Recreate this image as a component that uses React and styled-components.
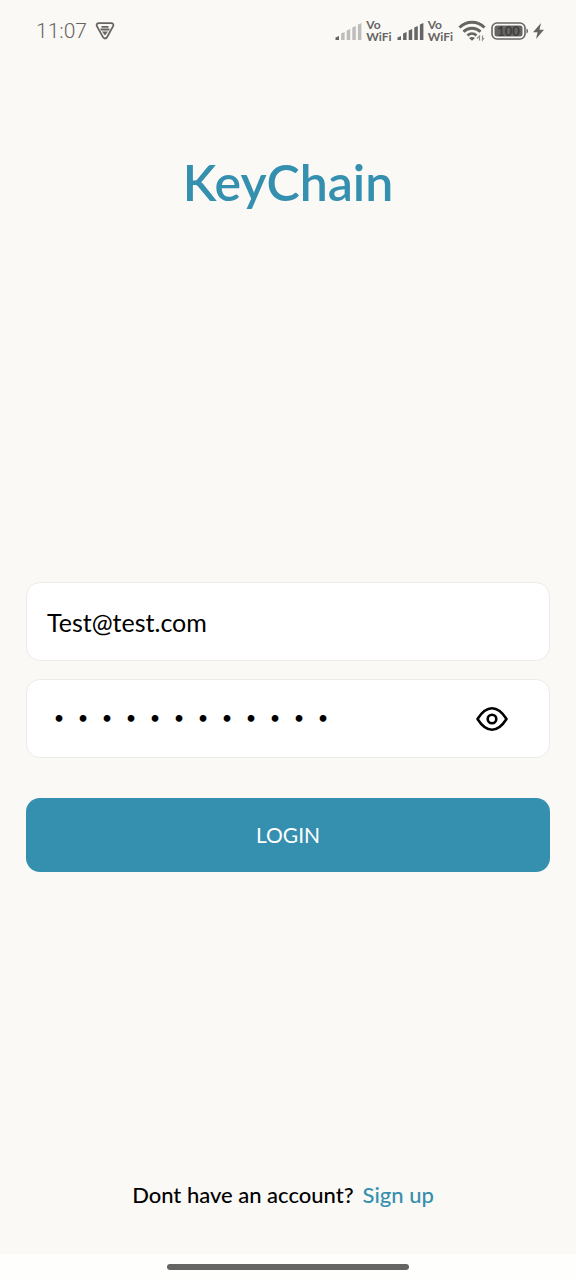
import React, { useState } from "react";
import styled, { createGlobalStyle } from "styled-components";

const teal = "#358fae";
const ink = "#666563";

const GlobalStyle = createGlobalStyle`
  *, *::before, *::after { box-sizing: border-box; }
  body {
    margin: 0;
    background: #faf9f6;
    color: #0b0b0b;
    font-family: Lato, "Liberation Sans", sans-serif;
  }
`;

const Screen = styled.div`
  display: flex;
  flex-direction: column;
  min-height: 100vh;
`;

const StatusBar = styled.header`
  display: flex;
  align-items: center;
  justify-content: space-between;
  height: 62px;
  padding: 0 32px 0 36px;
  color: ${ink};
`;

const StatusGroup = styled.div`
  display: flex;
  align-items: center;
  gap: ${(p) => p.$gap}px;
`;

const Clock = styled.time`
  font-family: Roboto, sans-serif;
  font-size: 21px;
  font-weight: 300;
  line-height: 28px;
`;

const CarrierLabel = styled.span`
  font-size: 12px;
  font-weight: 700;
  line-height: 12px;
  white-space: pre-line;
`;

const Content = styled.main`
  flex: 1;
  display: flex;
  flex-direction: column;
  padding: 86px 26px 40px;
`;

const Title = styled.h1`
  margin: 0;
  color: ${teal};
  font-size: 50px;
  font-weight: 600;
  line-height: 68px;
  text-align: center;
`;

const Form = styled.form`
  display: flex;
  flex-direction: column;
  gap: 18px;
  margin-top: 366px;
`;

const Field = styled.div`
  display: flex;
  align-items: center;
  height: 79px;
  padding: 0 40px 0 20px;
  background: #fff;
  border: 1px solid #ecebe9;
  border-radius: 14px;
`;

const Input = styled.input`
  flex: 1;
  min-width: 0;
  padding: 0;
  border: 0;
  outline: 0;
  background: transparent;
  color: #000;
  font-family: inherit;
  font-size: 25px;
  line-height: 36px;

  &[type="password"] {
    padding-bottom: 4px;
    font-family: "Noto Sans CJK SC", sans-serif;
    font-size: 24px;
    font-weight: 900;
  }
`;

const IconButton = styled.button`
  display: flex;
  padding: 0;
  border: 0;
  background: none;
  color: #000;
  cursor: pointer;
`;

const LoginButton = styled.button`
  height: 74px;
  margin-top: 22px;
  border: 0;
  border-radius: 14px;
  background: ${teal};
  color: #fff;
  font-family: inherit;
  font-size: 21px;
  line-height: 28px;
  cursor: pointer;
`;

const SignUpPrompt = styled.p`
  display: flex;
  justify-content: center;
  gap: 9px;
  margin: auto 0 0;
  padding-right: 10px;
  color: #000;
  font-size: 22px;
  font-weight: 500;
  line-height: 38px;
`;

const SignUpLink = styled.a`
  color: ${teal};
  text-decoration: none;
`;

const NavBar = styled.footer`
  display: flex;
  align-items: center;
  justify-content: center;
  height: 26px;
  background: #fefefd;
`;

const HomeHandle = styled.div`
  width: 42%;
  height: 6px;
  border-radius: 3px;
  background: #656563;
`;

function ShieldIcon() {
  return (
    <svg width="20" height="18" viewBox="0 0 20 18" fill="none" stroke="currentColor" aria-hidden="true">
      <path d="M4 1.200h12c2.200 0 3 1.400 2 3.200l-6 10.800c-.9 1.700-3.100 1.700-4 0L2 4.400C1 2.600 1.800 1.200 4 1.200z" strokeWidth="1.800" />
      <path d="M6.500 4h7v1.800h-7zM5.500 6.600h9v2h-9zM7 9.400h6L10 13.500z" fill="currentColor" stroke="none" />
    </svg>
  );
}

function SignalIcon({ strength }) {
  const bars = [4, 8, 11, 14, 17];
  return (
    <svg width="27" height="18" viewBox="0 0 27 18" fill="currentColor" aria-hidden="true">
      {bars.map((h, i) => (
        <path
          key={h}
          d={`M${i * 5.6 + 0.5} ${18 - h + 1.5}l3.500-1.500v${h}h-3.500z`}
          opacity={i < strength ? 1 : 0.4}
        />
      ))}
    </svg>
  );
}

function WifiIcon() {
  return (
    <svg width="28" height="22" viewBox="0 0 28 22" fill="none" stroke="currentColor" aria-hidden="true">
      <path d="M1.500 7.500C8.500.6 19.500.6 26.500 7.500" strokeWidth="3" />
      <path d="M5.500 11.800c4.800-4.700 12.200-4.700 17 0" strokeWidth="3" />
      <path d="M9.500 15.500c2.600-2.500 6.400-2.500 9 0" strokeWidth="2.600" />
      <path d="M11 18c1.700-1.500 4.300-1.500 6 0L14 20.800z" fill="currentColor" stroke="none" />
      <path d="M19 18.500l2.500-2.500v4.500M24.500 15.500v4.500l1.500-2" strokeWidth="1.200" opacity="0.700" />
    </svg>
  );
}

function BatteryIcon() {
  return (
    <svg width="38" height="18" viewBox="0 0 38 18" aria-label="Battery 100">
      <rect x="1" y="1" width="33" height="16" rx="5" fill="none" stroke="currentColor" strokeWidth="1.600" />
      <rect x="3.500" y="3.500" width="28" height="11" rx="2.500" fill="currentColor" />
      <text x="17.500" y="13.500" textAnchor="middle" fontFamily="Lato, sans-serif" fontSize="13" fontWeight="700" fill="#3f3e3d">100</text>
      <path d="M35.500 6.500c2 .5 2 4.500 0 5z" fill="currentColor" />
    </svg>
  );
}

function BoltIcon() {
  return (
    <svg width="11" height="16" viewBox="0 0 11 16" fill="currentColor" aria-hidden="true">
      <path d="M8 0L0 9.200h4.500L3 16l8-9.200H6.500z" />
    </svg>
  );
}

function EyeIcon() {
  return (
    <svg width="34" height="28" viewBox="0 0 34 28" fill="none" stroke="currentColor" strokeWidth="2.600" strokeLinejoin="round" aria-hidden="true">
      <path d="M2.500 14C6 8.500 10.500 3.300 17 3.300S28 8.500 31.500 14C28 19.500 23.500 24.700 17 24.700S6 19.500 2.500 14z" />
      <circle cx="17" cy="14" r="4.300" />
    </svg>
  );
}

function Carrier({ strength }) {
  return (
    <StatusGroup $gap={4}>
      <SignalIcon strength={strength} />
      <CarrierLabel>{"Vo\nWiFi"}</CarrierLabel>
    </StatusGroup>
  );
}

export default function App() {
  const [email, setEmail] = useState("Test@test.com");
  const [password, setPassword] = useState("testpassword");
  const [visible, setVisible] = useState(false);

  return (
    <Screen>
      <GlobalStyle />
      <StatusBar>
        <StatusGroup $gap={8}>
          <Clock>11:07</Clock>
          <ShieldIcon />
        </StatusGroup>
        <StatusGroup $gap={5}>
          <Carrier strength={1} />
          <Carrier strength={5} />
          <WifiIcon />
          <StatusGroup $gap={4}>
            <BatteryIcon />
            <BoltIcon />
          </StatusGroup>
        </StatusGroup>
      </StatusBar>
      <Content>
        <Title>KeyChain</Title>
        <Form onSubmit={(e) => e.preventDefault()}>
          <Field>
            <Input
              type="email"
              aria-label="Email"
              value={email}
              onChange={(e) => setEmail(e.target.value)}
            />
          </Field>
          <Field>
            <Input
              type={visible ? "text" : "password"}
              aria-label="Password"
              value={password}
              onChange={(e) => setPassword(e.target.value)}
            />
            <IconButton
              type="button"
              aria-label="Show password"
              aria-pressed={visible}
              onClick={() => setVisible(!visible)}
            >
              <EyeIcon />
            </IconButton>
          </Field>
          <LoginButton type="submit">LOGIN</LoginButton>
        </Form>
        <SignUpPrompt>
          Dont have an account?
          <SignUpLink href="#signup">Sign up</SignUpLink>
        </SignUpPrompt>
      </Content>
      <NavBar>
        <HomeHandle />
      </NavBar>
    </Screen>
  );
}
